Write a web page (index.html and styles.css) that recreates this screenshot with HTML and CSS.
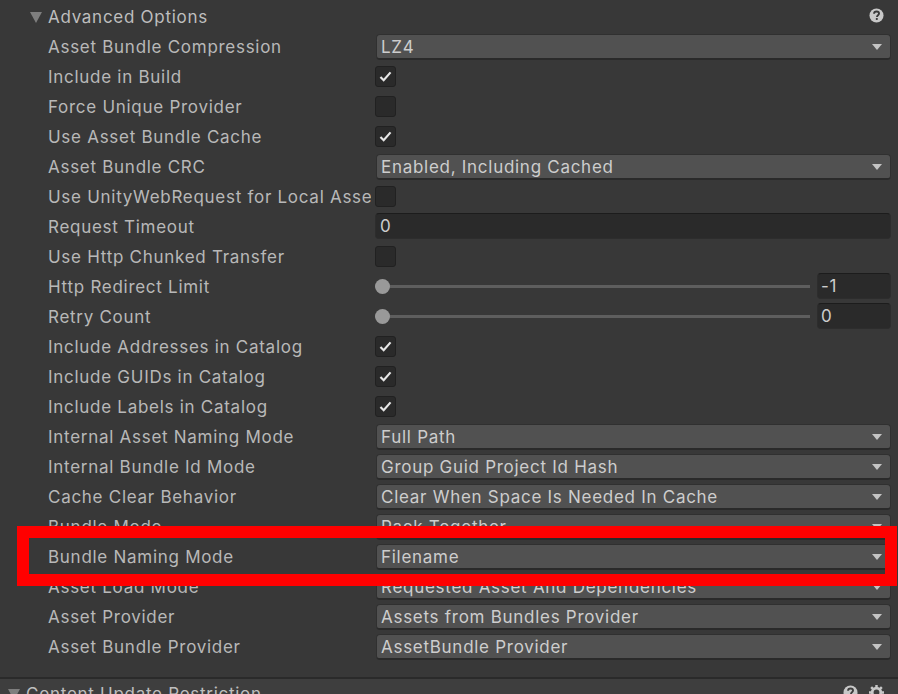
FILE: index.html
```html
<!DOCTYPE html>
<html lang="en">
<head>
<meta charset="utf-8">
<title>Advanced Options</title>
<link rel="stylesheet" href="styles.css">
</head>
<body>
<main class="panel">
  <header class="section-head">
    <span class="fold"></span>
    <span class="section-title">Advanced Options</span>
    <span class="head-icons">
      <svg class="icon" viewBox="0 0 16 16"><circle cx="8" cy="8" r="7.5" fill="#c8c8c8"/><path d="M5.4 6.2c0-1.6 1.2-2.5 2.7-2.5s2.6.9 2.6 2.2c0 1.9-2.2 1.9-2.2 3.7" fill="none" stroke="#383838" stroke-width="2"/><rect x="7.3" y="10.7" width="2" height="2" fill="#383838"/></svg>
    </span>
  </header>
  <div class="rows">
    <div class="row"><span class="label">Asset Bundle Compression</span><div class="control"><div class="select">LZ4</div></div></div>
    <div class="row"><span class="label">Include in Build</span><div class="control"><span class="check on"><svg viewBox="0 0 14 12"><path d="M1.5 6.5 5 10l7.5-8.5" fill="none" stroke="#e6e6e6" stroke-width="2.4"/></svg></span></div></div>
    <div class="row"><span class="label">Force Unique Provider</span><div class="control"><span class="check"></span></div></div>
    <div class="row"><span class="label">Use Asset Bundle Cache</span><div class="control"><span class="check on"><svg viewBox="0 0 14 12"><path d="M1.5 6.5 5 10l7.5-8.5" fill="none" stroke="#e6e6e6" stroke-width="2.4"/></svg></span></div></div>
    <div class="row"><span class="label">Asset Bundle CRC</span><div class="control"><div class="select">Enabled, Including Cached</div></div></div>
    <div class="row"><span class="label">Use UnityWebRequest for Local Asset Bundles</span><div class="control"><span class="check"></span></div></div>
    <div class="row"><span class="label">Request Timeout</span><div class="control field"><div class="input">0</div></div></div>
    <div class="row"><span class="label">Use Http Chunked Transfer</span><div class="control"><span class="check"></span></div></div>
    <div class="row"><span class="label">Http Redirect Limit</span><div class="control field"><div class="slider"><span class="thumb"></span></div><div class="input small">-1</div></div></div>
    <div class="row"><span class="label">Retry Count</span><div class="control field"><div class="slider"><span class="thumb"></span></div><div class="input small">0</div></div></div>
    <div class="row"><span class="label">Include Addresses in Catalog</span><div class="control"><span class="check on"><svg viewBox="0 0 14 12"><path d="M1.5 6.5 5 10l7.5-8.5" fill="none" stroke="#e6e6e6" stroke-width="2.4"/></svg></span></div></div>
    <div class="row"><span class="label">Include GUIDs in Catalog</span><div class="control"><span class="check on"><svg viewBox="0 0 14 12"><path d="M1.5 6.5 5 10l7.5-8.5" fill="none" stroke="#e6e6e6" stroke-width="2.4"/></svg></span></div></div>
    <div class="row"><span class="label">Include Labels in Catalog</span><div class="control"><span class="check on"><svg viewBox="0 0 14 12"><path d="M1.5 6.5 5 10l7.5-8.5" fill="none" stroke="#e6e6e6" stroke-width="2.4"/></svg></span></div></div>
    <div class="row"><span class="label">Internal Asset Naming Mode</span><div class="control"><div class="select">Full Path</div></div></div>
    <div class="row"><span class="label">Internal Bundle Id Mode</span><div class="control"><div class="select">Group Guid Project Id Hash</div></div></div>
    <div class="row"><span class="label">Cache Clear Behavior</span><div class="control"><div class="select">Clear When Space Is Needed In Cache</div></div></div>
    <div class="row"><span class="label">Bundle Mode</span><div class="control"><div class="select">Pack Together</div></div></div>
    <div class="row"><span class="label">Bundle Naming Mode</span><div class="control"><div class="select">Filename</div></div></div>
    <div class="row"><span class="label">Asset Load Mode</span><div class="control"><div class="select">Requested Asset And Dependencies</div></div></div>
    <div class="row"><span class="label">Asset Provider</span><div class="control"><div class="select">Assets from Bundles Provider</div></div></div>
    <div class="row"><span class="label">Asset Bundle Provider</span><div class="control"><div class="select">AssetBundle Provider</div></div></div>
  </div>
  <footer class="section-foot">
    <span class="fold"></span>
    <span class="section-title">Content Update Restriction</span>
    <span class="foot-icons">
      <svg class="icon" viewBox="0 0 16 16"><circle cx="8" cy="8" r="7.5" fill="#c8c8c8"/><path d="M5.4 6.2c0-1.6 1.2-2.5 2.7-2.5s2.6.9 2.6 2.2c0 1.9-2.2 1.9-2.2 3.7" fill="none" stroke="#3e3e3e" stroke-width="2"/><rect x="7.3" y="10.7" width="2" height="2" fill="#3e3e3e"/></svg>
      <svg class="icon" viewBox="0 0 16 16"><circle cx="8" cy="8" r="4.6" fill="none" stroke="#c8c8c8" stroke-width="3"/><path d="M8 0v3M8 13v3M0 8h3M13 8h3M2.3 2.3l2.2 2.2M11.5 11.5l2.2 2.2M13.7 2.3l-2.2 2.2M4.5 11.5l-2.2 2.2" stroke="#c8c8c8" stroke-width="2.6"/></svg>
    </span>
  </footer>
</main>
<div class="highlight"></div>
</body>
</html>
```

FILE: styles.css
```css
html, body {
  margin: 0;
  padding: 0;
  height: 694px;
  overflow: hidden;
  background: #383838;
}

body {
  position: relative;
  font-family: Inter, "Noto Sans", sans-serif;
  font-size: 17px;
  letter-spacing: 0.72px;
  color: #b8b8b8;
}

.panel {
  display: flex;
  flex-direction: column;
  padding-top: 2px;
}

.section-head {
  display: flex;
  align-items: center;
  height: 30px;
  padding-left: 30px;
  padding-right: 14px;
}

.fold {
  width: 0;
  height: 0;
  border-left: 6px solid transparent;
  border-right: 6px solid transparent;
  border-top: 11px solid #7e7e7e;
  margin-right: 6px;
  flex: none;
}

.section-title {
  flex: 1;
  color: #bebebe;
}

.head-icons,
.foot-icons {
  display: flex;
  align-items: center;
  gap: 11px;
  margin-bottom: 4px;
}

.icon {
  width: 15px;
  height: 15px;
  display: block;
}

.rows {
  display: flex;
  flex-direction: column;
}

.row {
  display: flex;
  align-items: center;
  height: 30px;
  padding-left: 48px;
  padding-right: 7px;
}

.label {
  width: 323px;
  margin-right: 4px;
  flex: none;
  white-space: nowrap;
  overflow: hidden;
}

.control {
  flex: 1;
  min-width: 0;
  display: flex;
  align-items: center;
}

.control.field {
  margin-bottom: 2px;
}

.select {
  flex: 1;
  box-sizing: border-box;
  height: 26px;
  line-height: 25px;
  padding-left: 4px;
  margin-left: 1px;
  border: 1px solid #303030;
  border-bottom: 2px solid #2a2a2a;
  border-radius: 4px;
  color: #cdcdcd;
  background: #515151;
  position: relative;
}

.select::after {
  content: "";
  position: absolute;
  right: 8px;
  top: 9px;
  border-left: 5.5px solid transparent;
  border-right: 5.5px solid transparent;
  border-top: 6px solid #c4c4c4;
}

.check {
  box-sizing: border-box;
  width: 21px;
  height: 21px;
  margin-bottom: 1px;
  border: 1px solid #212121;
  border-radius: 3px;
  background: #2a2a2a;
  display: flex;
  align-items: center;
  justify-content: center;
}

.check svg {
  width: 13px;
  height: 11px;
  display: block;
}

.input {
  flex: 1;
  box-sizing: border-box;
  height: 26px;
  line-height: 25px;
  padding-left: 4px;
  border: 1px solid #2d2d2d;
  border-top-color: #1c1c1c;
  border-radius: 4px;
  color: #cdcdcd;
  background: #2a2a2a;
}

.input.small {
  flex: none;
  width: 74px;
  margin-left: 7px;
  padding-left: 3px;
}

.slider {
  flex: 1;
  height: 3px;
  background: #5e5e5e;
  position: relative;
}

.thumb {
  position: absolute;
  left: 0;
  top: -6px;
  width: 15px;
  height: 15px;
  border-radius: 50%;
  background: #999999;
}

.section-foot {
  display: flex;
  align-items: center;
  box-sizing: border-box;
  height: 32px;
  margin-top: 15px;
  padding: 0 14px 0 8px;
  border-top: 2px solid #2a2a2a;
  background: #3e3e3e;
}

.highlight {
  position: absolute;
  left: 17px;
  top: 526px;
  width: 856px;
  height: 36px;
  border: 12px solid #ff0000;
}
```
